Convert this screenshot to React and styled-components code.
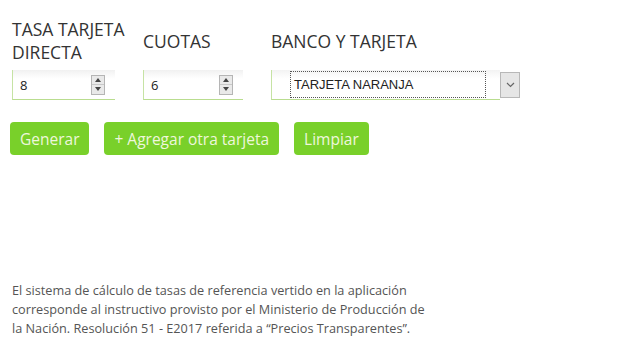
import React from "react";
import styled, { createGlobalStyle } from "styled-components";

const GlobalStyle = createGlobalStyle`
  html, body {
    margin: 0;
    padding: 0;
    background: #ffffff;
  }
  body {
    font-family: "Open Sans", "Liberation Sans", sans-serif;
    color: #333;
  }
`;

function App() {
    return (
        <Page>
            <GlobalStyle />
            <Fields>
                <Field width="118px">
                    <Label>TASA TARJETA DIRECTA</Label>
                    <NumberBox width="103px">
                        <Value>8</Value>
                        <Spinner />
                    </NumberBox>
                </Field>
                <Field width="115px">
                    <Label>CUOTAS</Label>
                    <NumberBox width="100px">
                        <Value>6</Value>
                        <Spinner />
                    </NumberBox>
                </Field>
                <Field width="250px">
                    <Label>BANCO Y TARJETA</Label>
                    <SelectRow>
                        <SelectBox>
                            <FocusText>TARJETA NARANJA</FocusText>
                        </SelectBox>
                        <DropButton>
                            <svg width="9" height="6" viewBox="0 0 9 6">
                                <path d="M1 1 L4.5 4.5 L8 1" fill="none" stroke="#666" strokeWidth="1.2" />
                            </svg>
                        </DropButton>
                    </SelectRow>
                </Field>
            </Fields>
            <Actions>
                <Button>Generar</Button>
                <Button>+ Agregar otra tarjeta</Button>
                <Button>Limpiar</Button>
            </Actions>
            <Disclaimer>
                El sistema de cálculo de tasas de referencia vertido en la aplicación
                <br />
                corresponde al instructivo provisto por el Ministerio de Producción de
                <br />
                la Nación. Resolución 51 - E2017 referida a “Precios Transparentes”.
            </Disclaimer>
        </Page>
    );
}

function Spinner() {
    return (
        <SpinBox>
            <SpinHalf>
                <svg width="6" height="4" viewBox="0 0 6 4"><path d="M0 4 L3 0 L6 4 Z" fill="#444" /></svg>
            </SpinHalf>
            <SpinHalf>
                <svg width="6" height="4" viewBox="0 0 6 4"><path d="M0 0 L3 4 L6 0 Z" fill="#444" /></svg>
            </SpinHalf>
        </SpinBox>
    );
}

export default App;

const Page = styled.div`
    width: 640px;
    height: 360px;
    box-sizing: border-box;
    padding: 17px 0 0 12px;
`;

const Fields = styled.div`
    display: flex;
    align-items: flex-end;
    gap: 13px;
`;

const Field = styled.div`
    width: ${(p) => p.width};
    display: flex;
    flex-direction: column;
`;

const Label = styled.div`
    height: 48px;
    display: flex;
    align-items: center;
    font-size: 17.5px;
    line-height: 23px;
    color: #333;
    margin-bottom: 5px;
`;

const NumberBox = styled.div`
    width: ${(p) => p.width};
    height: 30px;
    box-sizing: border-box;
    display: flex;
    align-items: center;
    justify-content: space-between;
    padding: 0 10px 0 7px;
    border-left: 1px solid #c6e3a4;
    border-bottom: 1px solid #b9dd8f;
    background: linear-gradient(#f1f1f1, #ffffff 30%);
`;

const Value = styled.span`
    font-size: 13px;
    color: #222;
`;

const SpinBox = styled.div`
    width: 12px;
    height: 18px;
    display: flex;
    flex-direction: column;
    border: 1px solid #b5b5b5;
    background: #e9e9e9;
`;

const SpinHalf = styled.div`
    flex: 1;
    display: flex;
    align-items: center;
    justify-content: center;
    & + & {
        border-top: 1px solid #c8c8c8;
    }
`;

const SelectRow = styled.div`
    display: flex;
    align-items: center;
`;

const SelectBox = styled.div`
    width: 229px;
    height: 30px;
    box-sizing: border-box;
    display: flex;
    align-items: center;
    padding: 0 14px 0 18px;
    border-left: 1px solid #c6e3a4;
    border-bottom: 1px solid #b9dd8f;
    background: linear-gradient(#f3f3f3, #ffffff 30%);
`;

const FocusText = styled.div`
    flex: 1;
    height: 27px;
    box-sizing: border-box;
    display: flex;
    align-items: center;
    padding-left: 3px;
    border: 1px dotted #555;
    font-family: "Liberation Sans", Arial, sans-serif;
    font-size: 13px;
    color: #222;
`;

const DropButton = styled.div`
    width: 20px;
    height: 26px;
    box-sizing: border-box;
    display: flex;
    align-items: center;
    justify-content: center;
    border: 1px solid #b8b8b8;
    background: #e6e6e6;
`;

const Actions = styled.div`
    display: flex;
    gap: 15px;
    margin: 22px 0 0 -2px;
`;

const Button = styled.div`
    height: 33px;
    box-sizing: border-box;
    padding: 0 10px;
    display: flex;
    align-items: center;
    border-radius: 4px;
    background: #79d02a;
    color: #eef7dc;
    font-size: 15.5px;
`;

const Disclaimer = styled.p`
    margin: 126px 0 0 0;
    font-size: 12.7px;
    line-height: 19px;
    color: #555;
`;
